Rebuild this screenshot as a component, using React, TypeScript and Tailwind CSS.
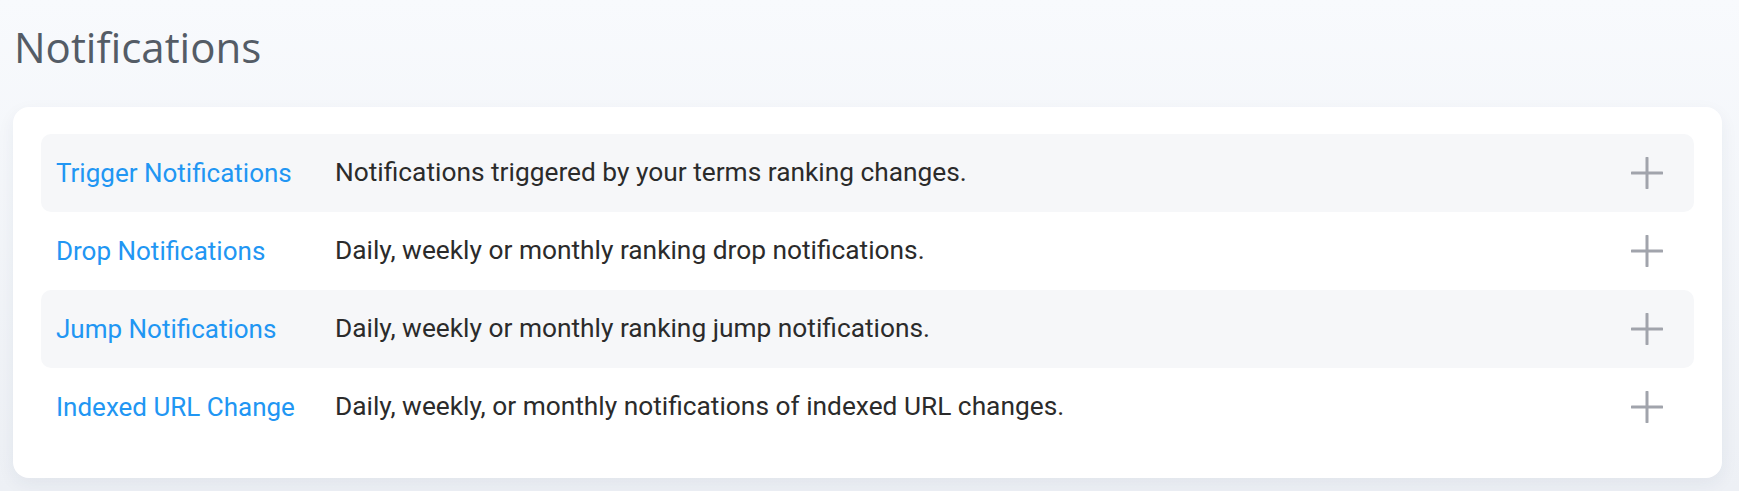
const rows = [
  { name: "Trigger Notifications", text: "Notifications triggered by your terms ranking changes." },
  { name: "Drop Notifications", text: "Daily, weekly or monthly ranking drop notifications." },
  { name: "Jump Notifications", text: "Daily, weekly or monthly ranking jump notifications." },
  { name: "Indexed URL Change", text: "Daily, weekly, or monthly notifications of indexed URL changes." },
];

function PlusIcon() {
  return (
    <svg width="32" height="32" viewBox="0 0 32 32" className="shrink-0 text-[#a1a4ac]">
      <path d="M16 1v30M1 16h30" stroke="currentColor" strokeWidth="3" strokeLinecap="round" />
    </svg>
  );
}

export default function App() {
  return (
    <div className="min-h-[491px] w-full bg-gradient-to-b from-[#f8fafd] to-[#edf0f5] px-[13px] pt-[20px] pb-[13px]">
      <h1 className="pl-[1px] text-[42px] leading-[54px] text-[#545c66] font-['Open_Sans',sans-serif] font-normal">
        Notifications
      </h1>

      <div className="mt-[33px] w-[1709px] rounded-[16px] bg-white px-[28px] pt-[27px] pb-[32px] shadow-[0_6px_18px_rgba(30,50,90,0.06)]">
        {rows.map((row, i) => (
          <div
            key={row.name}
            className={`flex h-[78px] items-center rounded-[10px] pl-[15px] pr-[31px] font-['Roboto',sans-serif] ${
              i % 2 === 0 ? "bg-[#f6f7f9]" : ""
            }`}
          >
            <span className="w-[279px] shrink-0 text-[26px] text-[#2196f3]">{row.name}</span>
            <span className="flex-1 text-[26.3px] text-[#2b2b2b]">{row.text}</span>
            <PlusIcon />
          </div>
        ))}
      </div>
    </div>
  );
}
